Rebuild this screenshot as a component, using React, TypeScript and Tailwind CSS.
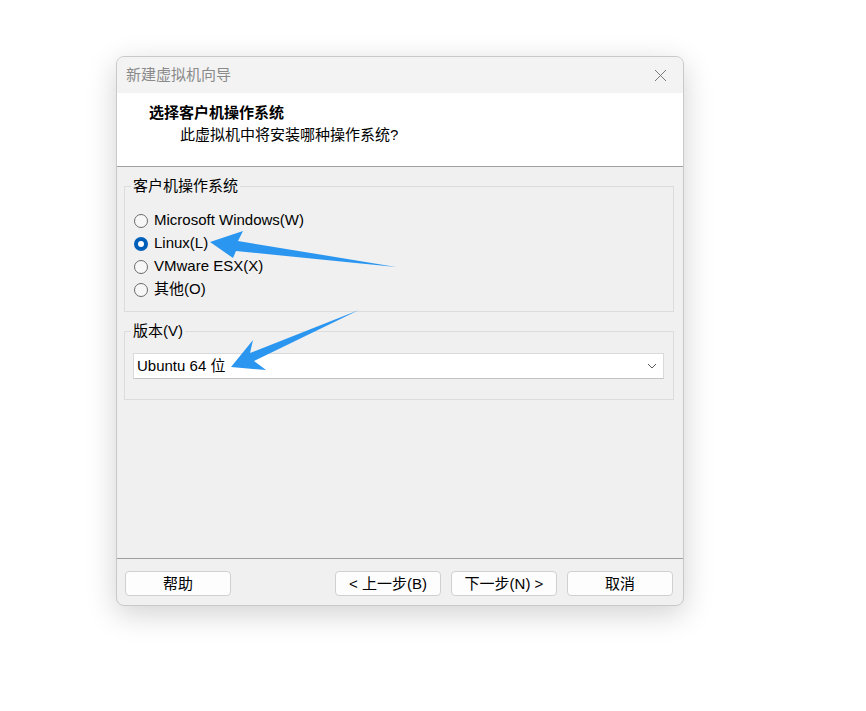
import React from "react";

const font = { fontFamily: '"Liberation Sans", "Noto Sans CJK SC", sans-serif' };

type Option = { label: string; checked?: boolean };

const osOptions: Option[] = [
  { label: "Microsoft Windows(W)" },
  { label: "Linux(L)", checked: true },
  { label: "VMware ESX(X)" },
  { label: "其他(O)" },
];

function Radio({ label, checked }: Option) {
  return (
    <div className="flex h-[23px] items-center gap-[6px]">
      {checked ? (
        <span className="ml-px flex h-[14px] w-[14px] items-center justify-center rounded-full bg-[#005fb8]">
          <span className="h-[6px] w-[6px] rounded-full bg-white" />
        </span>
      ) : (
        <span className="ml-px h-[14px] w-[14px] rounded-full border border-[#6b6b6b] bg-[#f7f7f7]" />
      )}
      <span>{label}</span>
    </div>
  );
}

function Button({ children }: { children: React.ReactNode }) {
  return (
    <button className="flex h-[25px] w-[106px] items-center justify-center rounded-[4px] border border-[#d0d0d0] bg-[#fdfdfd] text-[15px] leading-none text-black">
      {children}
    </button>
  );
}

export default function App() {
  return (
    <div className="relative h-[711px] w-full bg-white text-[15px] text-black" style={font}>
      {/* Wizard window */}
      <div className="ml-[116px] pt-[56px]">
        <div className="flex h-[550px] w-[568px] flex-col overflow-hidden rounded-lg border border-[#c9c9c9] bg-[#f0f0f0] shadow-[0_8px_30px_rgba(0,0,0,0.18)]">
          {/* Title bar */}
          <div className="flex h-[36px] items-center justify-between bg-[#f3f3f3] pl-[9px] pr-[15px]">
            <span className="text-[15px] text-[#8a8a8a]">新建虚拟机向导</span>
            <svg width="13" height="13" viewBox="0 0 13 13" className="mr-[1px]">
              <path d="M1 1 L12 12 M12 1 L1 12" stroke="#7a7a7a" strokeWidth="1" fill="none" />
            </svg>
          </div>

          {/* Header */}
          <div className="h-[74px] border-b border-[#a0a0a0] bg-white pt-[9px]">
            <div className="pl-[32px] text-[15px] font-bold leading-[22px]">选择客户机操作系统</div>
            <div className="pl-[63px] text-[15px] leading-[22px]">此虚拟机中将安装哪种操作系统?</div>
          </div>

          {/* Body */}
          <div className="flex-1 pl-[7px] pr-[9px]">
            <fieldset className="mt-[9px] border border-[#dcdcdc] px-[8px]">
              <legend className="-ml-[2px] px-[2px] leading-[20px]">客户机操作系统</legend>
              <div className="pb-[10px] pt-[13px]">
                {osOptions.map((o) => (
                  <Radio key={o.label} {...o} />
                ))}
              </div>
            </fieldset>

            <fieldset className="mt-[9px] border border-[#dcdcdc] px-[8px]">
              <legend className="-ml-[2px] px-[2px] leading-[20px]">版本(V)</legend>
              <div className="pb-[20px] pt-[12px]">
                <div className="mr-px flex h-[26px] items-center justify-between border border-[#d9d9d9] border-b-[#c4c4c4] bg-white pl-[3px] pr-[6px]">
                  <span>Ubuntu 64 位</span>
                  <svg width="10" height="6" viewBox="0 0 10 6">
                    <path d="M1 1 L5 5 L9 1" stroke="#5a5a5a" strokeWidth="1" fill="none" />
                  </svg>
                </div>
              </div>
            </fieldset>
          </div>

          {/* Footer */}
          <div className="flex h-[47px] items-start justify-between border-t border-[#a0a0a0] pl-[8px] pr-[10px] pt-[12px]">
            <Button>帮助</Button>
            <div className="flex gap-[10px]">
              <Button>&lt; 上一步(B)</Button>
              <Button>下一步(N) &gt;</Button>
              <Button>取消</Button>
            </div>
          </div>
        </div>
      </div>

      {/* Annotation arrows */}
      <svg className="pointer-events-none absolute left-0 top-0" width="866" height="711">
        <polygon
          points="210,242 243,231 238,241 396,267 236,251 233,258"
          fill="#2b96f0"
        />
        <polygon
          points="231,367 253,340 250,353 359,310 254,361 266,370"
          fill="#2b96f0"
        />
      </svg>
    </div>
  );
}
